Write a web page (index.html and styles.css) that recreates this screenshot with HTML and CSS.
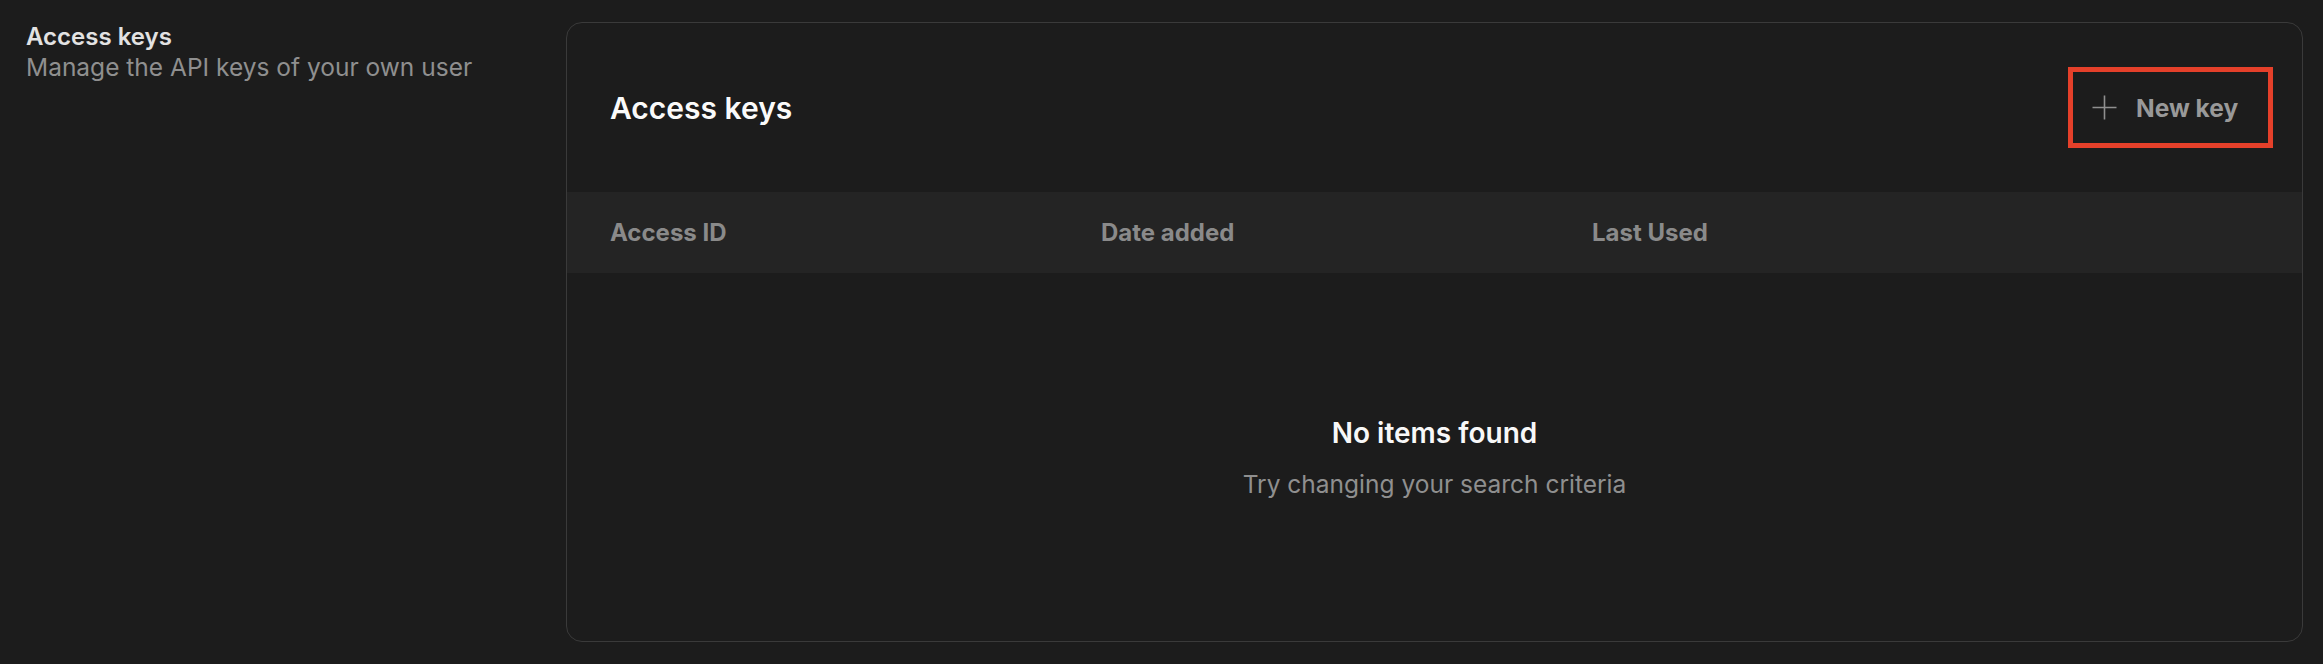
FILE: index.html
```html
<!DOCTYPE html>
<html lang="en">
<head>
<meta charset="utf-8">
<title>Access keys</title>
<link rel="stylesheet" href="styles.css">
</head>
<body>
<div class="page">
  <aside class="intro">
    <div class="intro-title">Access keys</div>
    <div class="intro-desc">Manage the API keys of your own user</div>
  </aside>
  <section class="card">
    <header class="card-head">
      <h2 class="card-title">Access keys</h2>
      <button class="new-key" type="button">
        <svg class="plus" width="25" height="25" viewBox="0 0 25 25" aria-hidden="true">
          <path d="M12.5 0.5V24.5M0.5 12.5H24.5" stroke="#8f8f8f" stroke-width="1.6" fill="none"/>
        </svg>
        <span>New key</span>
      </button>
    </header>
    <div class="table-head">
      <div class="th">Access ID</div>
      <div class="th">Date added</div>
      <div class="th">Last Used</div>
    </div>
    <div class="empty">
      <div class="empty-title">No items found</div>
      <div class="empty-desc">Try changing your search criteria</div>
    </div>
  </section>
</div>
</body>
</html>
```
FILE: styles.css
```css
* { box-sizing: border-box; }
html, body {
  margin: 0;
  padding: 0;
  background: #1c1c1c;
  font-family: Inter, "Noto Sans", sans-serif;
}
.page {
  display: flex;
  height: 664px;
  padding: 22px 20px 22px 26px;
}
.intro {
  width: 540px;
  flex: none;
  margin-top: -1px;
}
.intro-title {
  font-size: 24px;
  line-height: 31px;
  font-weight: 600;
  color: #e2e2e2;
}
.intro-desc {
  font-size: 24.5px;
  line-height: 31px;
  color: #8f8f8f;
}
.card {
  flex: 1;
  display: flex;
  flex-direction: column;
  border: 1.5px solid #3a3a3a;
  border-radius: 16px;
  background: #1c1c1c;
  overflow: hidden;
}
.card-head {
  height: 169px;
  flex: none;
  display: flex;
  align-items: center;
  justify-content: space-between;
  padding: 0 29px 0 43px;
}
.card-title {
  margin: 0;
  font-size: 30px;
  font-weight: 600;
  color: #fafafa;
}
.new-key {
  display: flex;
  align-items: center;
  gap: 19px;
  height: 81px;
  width: 205px;
  padding: 0 0 0 19px;
  border: 5px solid #e5402a;
  background: transparent;
  font-family: inherit;
  font-size: 24.5px;
  font-weight: 700;
  color: #999999;
}
.plus { flex: none; }
.table-head {
  height: 81px;
  flex: none;
  display: grid;
  grid-template-columns: 491px 491px 1fr;
  align-items: center;
  padding-left: 43px;
  background: #242424;
}
.th {
  font-size: 24px;
  font-weight: 700;
  color: #8a8a8a;
}
.empty {
  flex: 1;
  display: flex;
  flex-direction: column;
  align-items: center;
  justify-content: center;
  gap: 19px;
}
.empty-title {
  font-size: 28px;
  font-weight: 600;
  color: #f8f8f8;
}
.empty-desc {
  font-size: 24.5px;
  color: #8f8f8f;
}
```
